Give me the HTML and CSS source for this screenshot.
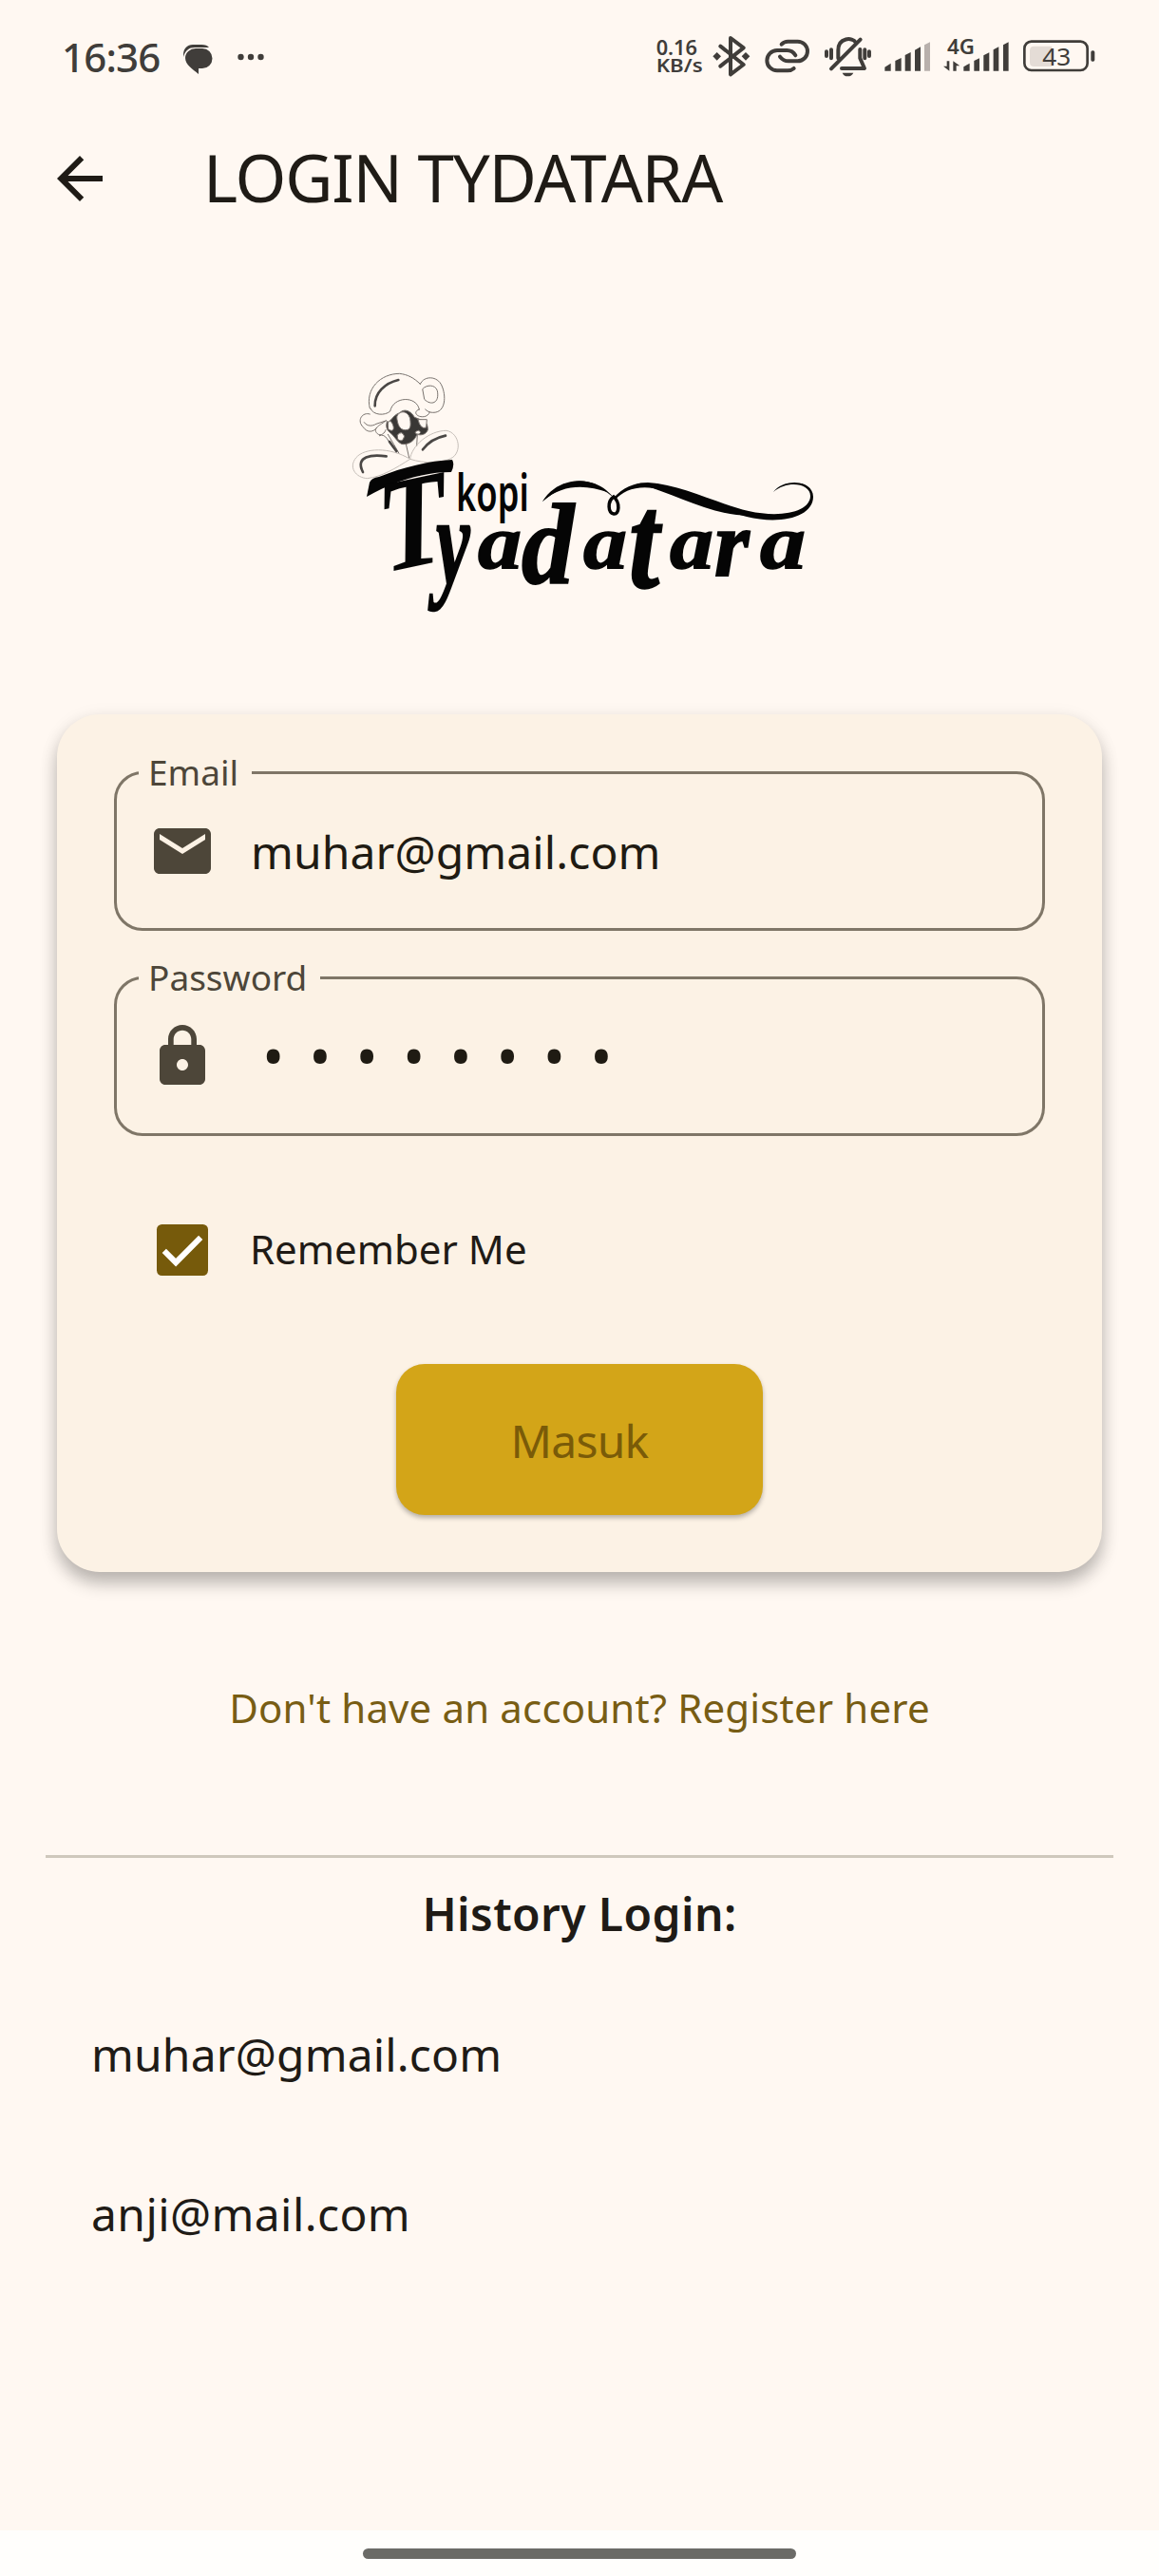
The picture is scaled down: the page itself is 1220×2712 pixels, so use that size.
FILE: index.html
```html
<!DOCTYPE html>
<html lang="id">
<head>
<meta charset="utf-8">
<title>Login Tydatara</title>
<link rel="stylesheet" href="styles.css">
</head>
<body>
<div class="screen">
  <div class="status-bar">
    <span class="clock">16:36</span>
    <svg class="chat" viewBox="0 0 32 32"><path d="M1 12C1 5 5 1 11 1h9q6 0 8 3H13C7 4 3 7 1 14z"/><path d="M14 5h7a10.500 10.500 0 0 1 0 21h-4v6C11 27 3 22 3 15A11 10 0 0 1 14 5z"/></svg>
    <svg class="more" viewBox="0 0 28 8"><circle cx="3.500" cy="4" r="3.200"/><circle cx="14" cy="4" r="3.200"/><circle cx="24.500" cy="4" r="3.200"/></svg>
    <div class="status-icons">
      <svg viewBox="66 40 150 160" width="50"><g class="small-bold"><text x="68" y="114" font-size="66" textLength="130" lengthAdjust="spacingAndGlyphs">0.16</text><text x="68" y="170" font-size="60" textLength="147" lengthAdjust="spacingAndGlyphs">KB/s</text></g></svg>
      <svg class="bluetooth" viewBox="246 40 120 160" width="40"><path class="line" d="M271 87l73 58-41 31V61l41 31-73 58"/><path d="M260 106l13 13-13 13-13-13zM351 106l13 13-13 13-13-13z"/></svg>
      <svg class="link-icon" viewBox="410 40 144 160" width="48"><path class="line" d="M463 81q8-9 20-9h31a31 31 0 0 1 0 62h-29q-16 0-27-14"/><path class="line" d="M502 157q-8 7-20 7h-33a31 31 0 0 1 0-64h31q18 0 27 16"/></svg>
      <svg class="mute" viewBox="600 40 148 160" width="49.300"><path class="line" d="M621 158l92-92M643 125v-25c0-42 46-42 55-25M712 97v28l14 32h-72M606 104v14M621 98v27M727 98v27M741 104v14"/><path d="M656 171h35q-5 11-18 11t-17-11z"/></svg>
      <svg class="signal" viewBox="790 40 146 160" width="48.700"><path d="M791 165v-12l19-12v24zM824 165v-32l19-9v41zM855 165v-50l18-9v59zM886 165V99l18-10v76z"/><path class="weak" d="M916 165V83l18-9v91z"/></svg>
      <svg class="cell" viewBox="974 40 208 160" width="69.300"><g class="small-bold"><text x="986" y="113" font-size="65" textLength="87" lengthAdjust="spacingAndGlyphs">4G</text></g><path d="M985 134h8v31l-19-15h11zM1005 165v-31l21 15h-11v16zM1038 165v-13l19-11v24zM1071 165v-32l17-8v40zM1101 165v-49l18-9v58zM1132 165V98l17-9v76zM1163 165V83l17-9v91z"/></svg>
      <svg class="battery" viewBox="1226 40 228 160" width="76"><rect class="case" x="1230" y="72" width="199" height="91" rx="22"/><path class="charge" d="M1247 100q0-13 13-13h57v64h-57q-13 0-13-13z"/><rect x="1440" y="101" width="12" height="34" rx="5"/><text x="1287" y="147" font-size="77" textLength="90" lengthAdjust="spacingAndGlyphs">43</text></svg>
    </div>
  </div>

  <header class="app-bar">
    <svg class="icon" viewBox="0 0 24 24"><path d="M20 11H7.830l5.590-5.590L12 4l-8 8 8 8 1.410-1.410L7.830 13H20v-2z"/></svg>
    <h1>LOGIN TYDATARA</h1>
  </header>

  <svg class="logo" viewBox="360 380 510 280" role="img" aria-label="Kopi Tyadatara">
    <g class="mascot" transform="translate(350 370) scale(.3333)">
      <path d="M118 180C102 118 152 70 212 70c25 3 45 13 65 33M120 180c8 22 45 24 62 9 10-48 84-50 92-6M277 103c12-28 55-26 68 5 14 30 14 86-28 85-10 0-18-4-24-10M285 118c12-14 40-14 46 6 8 40-20 48-40 28zM274 183c-22 7-8 26 15 23 8-1 16-7 18-14M118 198c-24-8-42 20-22 40 14 20 32 18 44 3"/>
      <path d="M100 224c10 14 26 12 38 5l30-10M170 218c-20 15-46 25-28 42 10 9 24-2 26-12M148 266c22-10 28 22 45 40M175 262c12 20 24 40 35 60M232 292l10 44M268 262l-2 36"/>
      <path class="faint" d="M245 340C180 300 100 305 75 335c-26 30-2 64 35 66 45-5 90-32 135-61zM245 340c4-42 60-90 115-90 42 8 50 70 14 88-28 14-80 18-129 2z"/>
      <path class="dark" d="M172 222c12 4 16-20 40-28 16-16 36-5 47 14 30 12 42 12 42 40-6 14-20 18-34 14-10 26-34 34-50 30-15-8-23-28-38-38-10-10-10-20-7-32z"/>
      <path class="hole" d="M203 208c4-22 34-24 42 4 4 28 0 36-16 36-18 0-24-20-26-40zM270 215h28l-2 25q-18 8-26-25zM175 230c2-18 14-10 18 10 0 14-10 10-16 6zM205 264q14-16 22 4-6 22-20 10zM262 254q12-10 16 2-6 10-16 2z"/>
      <path class="shade" d="M134 172c-1-42 32-72 74-82"/>
      <path class="shade" d="M170 331c-45-6-100-2-74 50M285 310c18-24 42-38 72-44M180 285l22 30"/>
    </g>
    <path d="M386 523l3-15q2-5 10-6c25-10 53-17 77-18q3 5-1 13c-30 0-61 10-89 26z"/>
    <g class="script">
      <text transform="matrix(.8 -.17 .13 .95 405 603)" font-size="145">T</text>
      <text class="heavy" transform="translate(459 615) scale(.98 1.600)" font-size="82">y</text>
      <text class="heavy" transform="translate(503 598) scale(1.150 1)" font-size="80">a</text>
      <text class="heavy" transform="translate(549 614) scale(1.150 1.250)" font-size="96">d</text>
      <text class="heavy" transform="translate(614 598) scale(1.150 1)" font-size="80">a</text>
      <text class="heavy" transform="translate(662 618) scale(1.250 1.550)" font-size="92">t</text>
      <text class="heavy" transform="translate(705 598) scale(1.150 1)" font-size="80">a</text>
      <text class="heavy" transform="translate(752 606) scale(1.150 1.200)" font-size="82">r</text>
      <text class="heavy" transform="translate(800 598) scale(1.200 1)" font-size="80">a</text>
    </g>
    <text class="kopi" transform="translate(480 538) scale(.66 1)" font-size="55">kopi</text>
    <path d="M571 528c22-28 56-28 75-4 9-10 21-16 36-16 35 2 72 22 106 30 36 8 65 0 65-16 0-13-24-17-39-4 11-15 42-13 42 5 0 21-34 30-70 21-35-8-68-24-98-30-18-3-33 3-40 12-22-22-49-22-77 2z"/>
    <path d="M571 528c16-26 50-28 68-10-20-7-46-10-68 10zM672 509c40-3 75 25 130 33-45 6-85-20-130-33z"/>
    <path class="loop" d="M646 523c-7 5-6 17 0 18s7-12 0-18z"/>
  </svg>

  <main class="card">
    <div class="field">
      <label>Email</label>
      <svg class="icon" viewBox="0 0 24 24"><path d="M20 4H4c-1.100 0-1.990.9-1.990 2L2 18c0 1.100.9 2 2 2h16c1.100 0 2-.9 2-2V6c0-1.100-.9-2-2-2zm0 4l-8 5-8-5V6l8 5 8-5v2z"/></svg>
      <span class="value">muhar@gmail.com</span>
    </div>
    <div class="field">
      <label>Password</label>
      <svg class="icon" viewBox="0 0 24 24"><path d="M18 8h-1V6c0-2.760-2.240-5-5-5S7 3.240 7 6v2H6c-1.100 0-2 .9-2 2v10c0 1.100.9 2 2 2h12c1.100 0 2-.9 2-2V10c0-1.100-.9-2-2-2zm-6 9c-1.100 0-2-.9-2-2s.9-2 2-2 2 .9 2 2-.9 2-2 2zm3.100-9H8.900V6c0-1.710 1.390-3.100 3.100-3.100 1.710 0 3.100 1.390 3.100 3.100v2z"/></svg>
      <span class="dots">••••••••</span>
    </div>
    <div class="remember">
      <svg class="icon" viewBox="0 0 24 24"><rect x="3" y="3" width="18" height="18" rx="1.800"/><path class="tick" d="M5.600 12.300l4.100 4.100 8.700-8.800"/></svg>
      <span>Remember Me</span>
    </div>
    <button class="submit">Masuk</button>
  </main>

  <a class="register">Don't have an account? Register here</a>
  <hr class="divider">
  <section class="history">
    <h2>History Login:</h2>
    <div class="account">muhar@gmail.com</div>
    <div class="account second">anji@mail.com</div>
  </section>
  <div class="nav-bar"><div class="handle"></div></div>
</div>
</body>
</html>
```

FILE: styles.css
```css
* { box-sizing: border-box; }
body { margin: 0; }
.screen {
  width: 1220px;
  height: 2712px;
  display: flex;
  flex-direction: column;
  background: #fff8f2;
  color: #1f1b16;
  font-family: "Noto Sans", sans-serif;
  overflow: hidden;
}
svg { display: block; flex: none; overflow: visible; }
.icon { width: 72px; height: 72px; fill: currentColor; }

.status-bar {
  height: 120px;
  display: flex;
  align-items: center;
  padding: 0 66px 0 65px;
  color: #403d3a;
  fill: #403d3a;
}
.clock { width: 127px; font-size: 42px; font-weight: 500; line-height: 60px; letter-spacing: -0.8px; }
.chat { width: 32px; height: 32px; margin-top: 3px; }
.more { width: 28px; height: 8px; margin-left: 26px; }
.status-icons { display: flex; margin-left: 412px; }
.status-icons svg { height: 53.300px; }
.line { fill: none; stroke: #403d3a; stroke-width: 12; stroke-linecap: round; stroke-linejoin: round; }
.small-bold { font-weight: 600; }
.weak { fill: #b8b0ac; }
.bluetooth { margin-left: 10px; }
.link-icon { margin-left: 14.700px; }
.mute { margin-left: 15.300px; }
.signal { margin-left: 14px; }
.cell { margin-left: 12.700px; }
.battery { margin-left: 14.700px; }
.case { fill: none; stroke: #403d3a; stroke-width: 8; }
.charge { fill: #e4dcd6; }

.app-bar { height: 136px; display: flex; align-items: center; padding-left: 48px; }
.app-bar h1 { margin: -4px 0 0 94px; font-size: 69px; font-weight: 400; line-height: 90px; letter-spacing: -1.200px; }

.logo { width: 510px; height: 280px; margin: 124px 0 0 360px; fill: #050505; }
.mascot path { fill: none; stroke: #77716d; stroke-width: 3; stroke-linecap: round; }
.mascot .faint { stroke: #c5beb8; }
.mascot .dark { fill: #393735; }
.mascot .hole { fill: #fff8f2; }
.mascot .shade { stroke: #4a4745; stroke-width: 8; }
.script { font-family: "Liberation Serif", serif; font-style: italic; font-weight: 700; }
.heavy { stroke: #050505; stroke-width: 1.500; }
.kopi { font-weight: 600; }
.loop { fill: none; stroke: #050505; stroke-width: 3.500; }

.card {
  width: 1100px;
  height: 903px;
  margin: 92px 60px 0;
  padding: 60px;
  display: flex;
  flex-direction: column;
  border-radius: 45px;
  background: #fcf2e5;
  box-shadow: 0 12px 18px rgba(0, 0, 0, .24), 0 4px 20px rgba(0, 0, 0, .08);
}
.field {
  position: relative;
  height: 168px;
  margin-bottom: 48px;
  padding-left: 33px;
  display: flex;
  align-items: center;
  border: 3px solid #7f7667;
  border-radius: 30px;
  color: #4d4639;
}
.field label {
  position: absolute;
  left: 23px;
  top: -27px;
  padding: 0 14px 0 10px;
  background: #fcf2e5;
  font-size: 37px;
  line-height: 50px;
}
.value { margin-left: 36px; font-size: 48px; letter-spacing: .1px; color: #1f1b13; }
.dots { margin: -3px 0 0 48px; font-size: 62px; letter-spacing: 26px; color: #1f1b13; }
.remember { display: flex; align-items: center; height: 72px; margin: 36px 0 0 36px; font-size: 42px; }
.remember svg { fill: #765a0b; }
.tick { fill: none; stroke: #fff; stroke-width: 2; }
.remember span { margin: -4px 0 0 35px; }
.submit {
  width: 386px;
  height: 159px;
  margin: 84px auto 0;
  border: 0;
  border-radius: 30px;
  background: #d3a518;
  color: #7a5b08;
  font: 400 48px "Noto Sans", sans-serif;
  letter-spacing: -.8px;
  padding-top: 3px;
  box-shadow: 0 3px 5px rgba(0, 0, 0, .28);
}

.register { margin-top: 113px; line-height: 60px; text-align: center; font-size: 42px; letter-spacing: .15px; color: #785d14; }
.divider { width: 1124px; height: 3px; margin: 125px auto 0; border: 0; background: #cfc8bc; }
.history { display: flex; flex-direction: column; font-size: 48px; letter-spacing: .15px; }
.history h2 { margin: 24px 0 0; line-height: 70px; text-align: center; font-size: 48px; font-weight: 600; letter-spacing: .4px; }
.account { margin-top: 29px; padding-left: 96px; line-height: 168px; }
.account.second { margin-top: 0; letter-spacing: .4px; }
.nav-bar { height: 48px; margin-top: auto; display: flex; justify-content: center; padding-top: 19px; background: #fffefc; }
.handle { width: 456px; height: 11px; border-radius: 6px; background: #6b6b67; }
```
